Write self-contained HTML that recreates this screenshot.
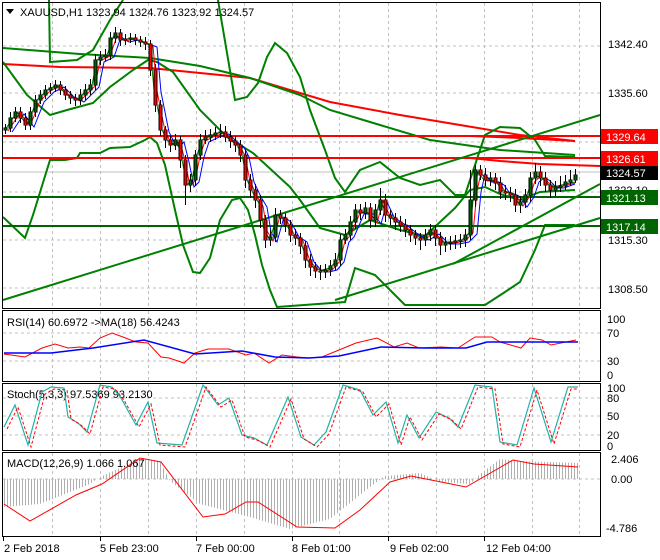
<!DOCTYPE html>
<html><head><meta charset="utf-8"><style>
html,body{margin:0;padding:0;background:#fff;width:660px;height:560px;overflow:hidden}
svg{display:block;font-family:"Liberation Sans",sans-serif;font-size:11px}
</style></head><body>
<svg width="660" height="560" viewBox="0 0 660 560">
<defs>
<pattern id="hp" x="0" y="0" width="3" height="4" patternUnits="userSpaceOnUse"><rect x="1" y="0" width="1" height="4" fill="#b0b0b0"/></pattern>
</defs>
<rect width="660" height="560" fill="#fff"/>
<g stroke="#c0c0c0" stroke-dasharray="3,3" stroke-width="1">
<path d="M52.5 3V308M100.5 3V308M148.5 3V308M196.5 3V308M244.5 3V308M292.5 3V308M339.5 3V308M388.5 3V308M436.5 3V308M484.5 3V308M532.5 3V308M579.5 3V308"/>
<path d="M52.5 311V381M100.5 311V381M148.5 311V381M196.5 311V381M244.5 311V381M292.5 311V381M339.5 311V381M388.5 311V381M436.5 311V381M484.5 311V381M532.5 311V381M579.5 311V381"/>
<path d="M52.5 384V450M100.5 384V450M148.5 384V450M196.5 384V450M244.5 384V450M292.5 384V450M339.5 384V450M388.5 384V450M436.5 384V450M484.5 384V450M532.5 384V450M579.5 384V450"/>
<path d="M52.5 453V536M100.5 453V536M148.5 453V536M196.5 453V536M244.5 453V536M292.5 453V536M339.5 453V536M388.5 453V536M436.5 453V536M484.5 453V536M532.5 453V536M579.5 453V536"/>
<path d="M3 46H600M3 93H600M3 142H600M3 192H600M3 240H600M3 288H600M3 333H600M3 361H600M3 398H600M3 416H600M3 435H600M3 479H600"/>
</g>
<line x1="3" y1="172" x2="600" y2="172" stroke="#c0c0c0"/>
<!-- long MAs -->
<polyline fill="none" stroke="#ff0000" stroke-width="2" points="3,64 60,67 150,68 250,78 330,102 400,115 460,125 520,135 575,141"/>
<polyline fill="none" stroke="#008000" stroke-width="2" points="3,48 80,54 150,58 200,66 250,78 300,95 330,110 380,125 430,140 500,150 575,155"/>
<!-- bollinger -->
<polyline fill="none" stroke="#008000" stroke-width="2" points="49,0 50,62 77,60 93,50 110,20 123,0"/>
<polyline fill="none" stroke="#008000" stroke-width="2" points="218,0 235,100 247,97 258,83 267,57 275,43 287,53 300,77 310,110 325,150 335,178 345,192 360,170 380,162 400,178 420,185 440,180 455,195 465,195 475,165 485,135 500,127 520,128 535,140 545,156 575,157"/>
<polyline fill="none" stroke="#008000" stroke-width="2" points="3,217 25,238 33,215 50,160 65,160 77,158 80,153 100,153 110,148 130,147 145,140 150,137 157,143 165,165 175,210 183,245 193,272 200,273 210,258 220,220 232,200 240,198 248,210 255,235 262,265 270,290 277,307 345,302 355,268 375,275 395,295 405,305 485,305 505,292 520,282 535,250 545,225 575,225"/>
<polyline fill="none" stroke="#008000" stroke-width="2" points="3,62 27,95 50,115 67,110 93,103 110,87 133,70 148,60 157,62 173,72 200,110 227,137 253,153 290,187 300,200 320,228 345,235 370,220 400,230 425,236 455,208 470,190 485,187 500,194 520,200 540,192 575,190"/>
<!-- levels -->
<line x1="3" y1="136" x2="600" y2="136" stroke="#ff0000" stroke-width="2"/>
<line x1="3" y1="158" x2="600" y2="158" stroke="#ff0000" stroke-width="2"/>
<polyline fill="none" stroke="#ff0000" stroke-width="2" points="470,158 500,161 540,164 600,166"/>
<polyline fill="none" stroke="#ff0000" stroke-width="2" points="470,136 520,138 575,141"/>
<line x1="3" y1="197" x2="600" y2="197" stroke="#006400" stroke-width="2"/>
<line x1="3" y1="226" x2="600" y2="226" stroke="#006400" stroke-width="2"/>
<!-- trendlines -->
<line x1="3" y1="300" x2="600" y2="115" stroke="#008000" stroke-width="2"/>
<line x1="335" y1="300" x2="600" y2="218" stroke="#008000" stroke-width="2"/>
<line x1="453" y1="264" x2="600" y2="184" stroke="#008000" stroke-width="2"/>
<!-- small MAs -->
<g fill="none" stroke-width="1">
<polyline stroke="#0000ff" transform="translate(9,2)" points="3,130 15,112 25,125 35,100 45,90 55,85 65,95 75,100 90,85 95,60 105,55 112,35 120,40 130,38 140,42 148,45 152,90 160,130 165,140 170,145 175,140 180,160 185,185 190,180 195,155 200,140 210,135 220,132 228,140 235,145 240,155 245,180 252,195 258,205 262,230 268,240 275,215 282,220 290,235 298,240 305,260 312,268 320,270 328,268 335,260 340,240 345,235 355,212 365,212 372,222 378,200 385,215 392,220 400,225 410,233 420,238 430,232 440,242 450,242 460,240 468,232 472,190 476,172 482,180 490,180 495,183 500,190 510,194 518,205 525,195 530,180 535,176 540,178 548,186 555,186 566,182"/>
<polyline stroke="#ff0000" transform="translate(5,1)" points="3,130 15,112 25,125 35,100 45,90 55,85 65,95 75,100 90,85 95,60 105,55 112,35 120,40 130,38 140,42 148,45 152,90 160,130 165,140 170,145 175,140 180,160 185,185 190,180 195,155 200,140 210,135 220,132 228,140 235,145 240,155 245,180 252,195 258,205 262,230 268,240 275,215 282,220 290,235 298,240 305,260 312,268 320,270 328,268 335,260 340,240 345,235 355,212 365,212 372,222 378,200 385,215 392,220 400,225 410,233 420,238 430,232 440,242 450,242 460,240 468,232 472,190 476,172 482,180 490,180 495,183 500,190 510,194 518,205 525,195 530,180 535,176 540,178 548,186 555,186 570,182"/>
<polyline stroke="#008000" transform="translate(2,0)" points="3,130 15,112 25,125 35,100 45,90 55,85 65,95 75,100 90,85 95,60 105,55 112,35 120,40 130,38 140,42 148,45 152,90 160,130 165,140 170,145 175,140 180,160 185,185 190,180 195,155 200,140 210,135 220,132 228,140 235,145 240,155 245,180 252,195 258,205 262,230 268,240 275,215 282,220 290,235 298,240 305,260 312,268 320,270 328,268 335,260 340,240 345,235 355,212 365,212 372,222 378,200 385,215 392,220 400,225 410,233 420,238 430,232 440,242 450,242 460,240 468,232 472,190 476,172 482,180 490,180 495,183 500,190 510,194 518,205 525,195 530,180 535,176 540,178 548,186 555,186 573,182"/>
</g>
<!-- wicks -->
<path stroke="#000" stroke-width="1" fill="none" d="M5.5 124V134M10.5 112V132M15.5 107V122M20.5 107V123M25.5 113V130M30.5 107V130M35.5 95V117M40.5 90V104M45.5 85V99M50.5 83V94M55.5 80V92M60.5 81V95M65.5 86V100M70.5 91V104M75.5 94V106M80.5 89V105M85.5 84V100M90.5 79V95M95.5 54V90M100.5 51V65M105.5 49V61M110.5 32V60M115.5 27V43M120.5 29V46M125.5 34V45M130.5 33V43M135.5 34V45M140.5 36V47M145.5 37V50M150.5 40V76M155.5 64V112M160.5 100V136M165.5 126V148M170.5 136V152M175.5 134V150M180.5 136V168M185.5 155V205M190.5 174V192M195.5 150V186M200.5 134V160M205.5 130V144M210.5 129V142M215.5 127V140M220.5 124V138M225.5 126V142M230.5 131V148M235.5 136V152M240.5 140V162M245.5 150V188M250.5 174V198M255.5 184V208M260.5 195V228M265.5 215V248M270.5 230V246M275.5 208V242M280.5 210V224M285.5 213V232M290.5 220V242M295.5 229V245M300.5 233V254M305.5 241V268M310.5 254V276M315.5 262V278M320.5 265V280M325.5 264V278M330.5 260V276M335.5 253V270M340.5 234V266M345.5 229V244M350.5 216V240M355.5 204V229M360.5 204V220M365.5 202V219M370.5 203V228M375.5 204V227M380.5 188V215M385.5 194V222M390.5 210V225M395.5 213V230M400.5 216V232M405.5 219V237M410.5 225V242M415.5 230V245M420.5 233V250M425.5 229V246M430.5 224V241M435.5 225V246M440.5 232V255M445.5 237V252M450.5 236V250M455.5 235V249M460.5 234V248M465.5 229V247M470.5 170V240M475.5 165V207M480.5 165V180M485.5 168V186M490.5 172V186M495.5 173V190M500.5 177V199M505.5 185V200M510.5 187V202M515.5 189V212M520.5 196V213M525.5 189V208M530.5 172V202M535.5 163V184M540.5 166V186M545.5 172V192M550.5 180V198M555.5 181V196M560.5 176V192M565.5 175V190M570.5 170V186M575.5 169V183"/>
<!-- green (bull) bodies -->
<path stroke="#000" stroke-width="4" fill="none" d="M5.5 130.5V127.5M10.5 128.5V117.5M15.5 118.5V111.5M30.5 125.5V111.5M35.5 112.5V99.5M40.5 100.5V94.5M45.5 95.5V89.5M50.5 90.5V87.5M55.5 88.5V84.5M80.5 100.5V94.5M85.5 95.5V89.5M90.5 90.5V84.5M95.5 85.5V59.5M100.5 60.5V56.5M105.5 57.5V54.5M110.5 55.5V37.5M115.5 38.5V32.5M125.5 40.5V38.5M130.5 39.5V37.5M175.5 145.5V139.5M190.5 185.5V179.5M195.5 180.5V154.5M200.5 155.5V139.5M205.5 140.5V136.5M210.5 137.5V134.5M215.5 135.5V132.5M220.5 133.5V131.5M270.5 240.5V236.5M275.5 237.5V214.5M325.5 272.5V269.5M330.5 270.5V265.5M335.5 266.5V259.5M340.5 260.5V239.5M345.5 240.5V234.5M350.5 235.5V221.5M355.5 222.5V209.5M365.5 213.5V207.5M375.5 220.5V209.5M380.5 210.5V199.5M425.5 240.5V234.5M430.5 235.5V229.5M445.5 245.5V242.5M450.5 243.5V241.5M455.5 242.5V240.5M460.5 241.5V239.5M465.5 240.5V234.5M470.5 235.5V199.5M475.5 200.5V169.5M490.5 180.5V177.5M520.5 205.5V201.5M525.5 202.5V194.5M530.5 195.5V177.5M535.5 178.5V171.5M555.5 190.5V186.5M560.5 187.5V185.5M565.5 186.5V181.5M570.5 182.5V179.5M575.5 180.5V174.5"/>
<path stroke="#006400" stroke-width="2" fill="none" d="M5.5 130V128M10.5 128V118M15.5 118V112M30.5 125V112M35.5 112V100M40.5 100V95M45.5 95V90M50.5 90V88M55.5 88V85M80.5 100V95M85.5 95V90M90.5 90V85M95.5 85V60M100.5 60V57M105.5 57V55M110.5 55V38M115.5 38V33M125.5 40V39M130.5 39V38M175.5 145V140M190.5 185V180M195.5 180V155M200.5 155V140M205.5 140V137M210.5 137V135M215.5 135V133M220.5 133V132M270.5 240V237M275.5 237V215M325.5 272V270M330.5 270V266M335.5 266V260M340.5 260V240M345.5 240V235M350.5 235V222M355.5 222V210M365.5 213V208M375.5 220V210M380.5 210V200M425.5 240V235M430.5 235V230M445.5 245V243M450.5 243V242M455.5 242V241M460.5 241V240M465.5 240V235M470.5 235V200M475.5 200V170M490.5 180V178M520.5 205V202M525.5 202V195M530.5 195V178M535.5 178V172M555.5 190V187M560.5 187V186M565.5 186V182M570.5 182V180M575.5 180V175"/>
<!-- red (bear) bodies -->
<path stroke="#000" stroke-width="4" fill="none" d="M20.5 111.5V118.5M25.5 117.5V125.5M60.5 84.5V90.5M65.5 89.5V95.5M70.5 94.5V98.5M75.5 97.5V100.5M120.5 32.5V40.5M135.5 37.5V40.5M140.5 39.5V42.5M145.5 41.5V44.5M150.5 43.5V70.5M155.5 69.5V105.5M160.5 104.5V130.5M165.5 129.5V140.5M170.5 139.5V145.5M180.5 139.5V160.5M185.5 159.5V185.5M225.5 131.5V137.5M230.5 136.5V141.5M235.5 140.5V145.5M240.5 144.5V155.5M245.5 154.5V180.5M250.5 179.5V190.5M255.5 189.5V200.5M260.5 199.5V220.5M265.5 219.5V240.5M280.5 214.5V218.5M285.5 217.5V225.5M290.5 224.5V235.5M295.5 234.5V238.5M300.5 237.5V246.5M305.5 245.5V260.5M310.5 259.5V267.5M315.5 266.5V271.5M320.5 270.5V272.5M360.5 209.5V213.5M370.5 207.5V220.5M385.5 199.5V215.5M390.5 214.5V218.5M395.5 217.5V222.5M400.5 221.5V225.5M405.5 224.5V230.5M410.5 229.5V235.5M415.5 234.5V238.5M420.5 237.5V240.5M435.5 229.5V238.5M440.5 237.5V245.5M480.5 169.5V175.5M485.5 174.5V180.5M495.5 177.5V183.5M500.5 182.5V192.5M505.5 191.5V193.5M510.5 192.5V195.5M515.5 194.5V205.5M540.5 171.5V178.5M545.5 177.5V185.5M550.5 184.5V190.5"/>
<path stroke="#ff0000" stroke-width="2" fill="none" d="M20.5 112V118M25.5 118V125M60.5 85V90M65.5 90V95M70.5 95V98M75.5 98V100M120.5 33V40M135.5 38V40M140.5 40V42M145.5 42V44M150.5 44V70M155.5 70V105M160.5 105V130M165.5 130V140M170.5 140V145M180.5 140V160M185.5 160V185M225.5 132V137M230.5 137V141M235.5 141V145M240.5 145V155M245.5 155V180M250.5 180V190M255.5 190V200M260.5 200V220M265.5 220V240M280.5 215V218M285.5 218V225M290.5 225V235M295.5 235V238M300.5 238V246M305.5 246V260M310.5 260V267M315.5 267V271M320.5 271V272M360.5 210V213M370.5 208V220M385.5 200V215M390.5 215V218M395.5 218V222M400.5 222V225M405.5 225V230M410.5 230V235M415.5 235V238M420.5 238V240M435.5 230V238M440.5 238V245M480.5 170V175M485.5 175V180M495.5 178V183M500.5 183V192M505.5 192V193M510.5 193V195M515.5 195V205M540.5 172V178M545.5 178V185M550.5 185V190"/>
<!-- title -->
<path d="M6 9h8l-4 5z" fill="#000"/>
<text x="20" y="16">XAUUSD,H1  1323.94 1324.76 1323.92 1324.57</text>
<!-- frames -->
<g fill="none" stroke="#000">
<rect x="2.5" y="2.5" width="598" height="306"/>
<rect x="2.5" y="310.5" width="598" height="71"/>
<rect x="2.5" y="383.5" width="598" height="67"/>
<rect x="2.5" y="452.5" width="598" height="84"/>
</g>
<!-- right axis -->
<g fill="#000">
<text x="608" y="48">1342.40</text>
<text x="608" y="97">1335.60</text>
<text x="608" y="194">1322.10</text>
<text x="608" y="244">1315.30</text>
<text x="608" y="293">1308.50</text>
</g>
<rect x="601" y="129" width="57" height="15" fill="#ff0000"/><text x="606" y="141" fill="#fff">1329.64</text>
<rect x="601" y="151" width="57" height="15" fill="#ff0000"/><text x="606" y="163" fill="#fff">1326.61</text>
<rect x="601" y="166" width="57" height="14" fill="#000"/><text x="606" y="177" fill="#fff">1324.57</text>
<rect x="601" y="190" width="57" height="15" fill="#006400"/><text x="606" y="202" fill="#fff">1321.13</text>
<rect x="601" y="219" width="57" height="15" fill="#006400"/><text x="606" y="231" fill="#fff">1317.14</text>
<!-- RSI -->
<text x="7" y="326">RSI(14) 60.6972  -&gt;MA(18) 56.4243</text>
<polyline fill="none" stroke="#ff0000" points="4,354 25,357 42,348 55,344 68,348 80,347 89,348 100,338 112,333 123,337 136,342 148,343 161,357 169,358 184,363 195,353 208,349 229,349 246,355 254,353 269,363 282,355 297,357 309,358 322,357 339,350 356,343 377,338 394,347 407,343 419,348 441,347 458,348 475,337 492,337 500,342 521,348 530,338 542,340 551,345 576,340"/>
<polyline fill="none" stroke="#0000ff" stroke-width="1.5" points="4,353 51,353 93,348 144,340 195,354 242,351 275,357 309,358 339,356 381,347 424,348 466,348 487,342 530,342 578,342"/>
<g><text x="607" y="323">100</text><text x="607" y="337">70</text><text x="607" y="365">30</text><text x="607" y="379">0</text></g>
<!-- Stoch -->
<text x="7" y="398">Stoch(5,3,3) 97.5369 93.2130</text>
<polyline fill="none" stroke="#20b2aa" stroke-width="1.2" points="4,427 15,405 28,445 42,392 51,387 64,388 68,417 78,423 87,432 100,385 112,387 121,398 136,425 148,402 157,443 182,445 203,385 218,405 229,398 242,435 254,438 267,445 288,397 301,437 314,445 326,432 343,385 360,390 373,415 386,402 398,443 407,415 419,438 436,412 449,418 458,427 475,385 492,387 500,442 517,445 534,388 551,442 568,387 578,387"/>
<polyline fill="none" stroke="#ff0000" stroke-dasharray="3,2" transform="translate(3,2)" points="4,427 15,405 28,445 42,392 51,387 64,388 68,417 78,423 87,432 100,385 112,387 121,398 136,425 148,402 157,443 182,445 203,385 218,405 229,398 242,435 254,438 267,445 288,397 301,437 314,445 326,432 343,385 360,390 373,415 386,402 398,443 407,415 419,438 436,412 449,418 458,427 475,385 492,387 500,442 517,445 534,388 551,442 568,387 575,387"/>
<g><text x="607" y="392">100</text><text x="607" y="402">80</text><text x="607" y="420">50</text><text x="607" y="439">20</text><text x="607" y="450">0</text></g>
<!-- MACD -->
<polygon fill="url(#hp)" points="3,507 40,504 90,484 100,477 140,459 160,461 170,481 200,504 250,517 290,529 330,519 370,487 385,476 420,473 440,482 470,484 480,474 500,459 520,461 578,463 578,479 3,479"/>
<text x="7" y="467">MACD(12,26,9) 1.066 1.067</text>
<polyline fill="none" stroke="#ff0000" points="4,504 30,521 76,495 102,484 140,458 161,462 203,517 225,514 246,502 258,502 297,527 335,528 360,510 390,482 411,476 441,482 466,487 513,460 534,464 578,467"/>
<g><text x="611" y="463">2.406</text><text x="611" y="483">0.00</text><text x="606" y="532">-4.786</text></g>
<!-- dates -->
<g stroke="#000"><path d="M3.5 537v4M100.5 537v4M196.5 537v4M292.5 537v4M388.5 537v4M484.5 537v4"/></g>
<g><text x="4" y="552">2 Feb 2018</text><text x="100" y="552">5 Feb 23:00</text><text x="196" y="552">7 Feb 00:00</text><text x="292" y="552">8 Feb 01:00</text><text x="390" y="552">9 Feb 02:00</text><text x="486" y="552">12 Feb 04:00</text></g>
</svg>
</body></html>
